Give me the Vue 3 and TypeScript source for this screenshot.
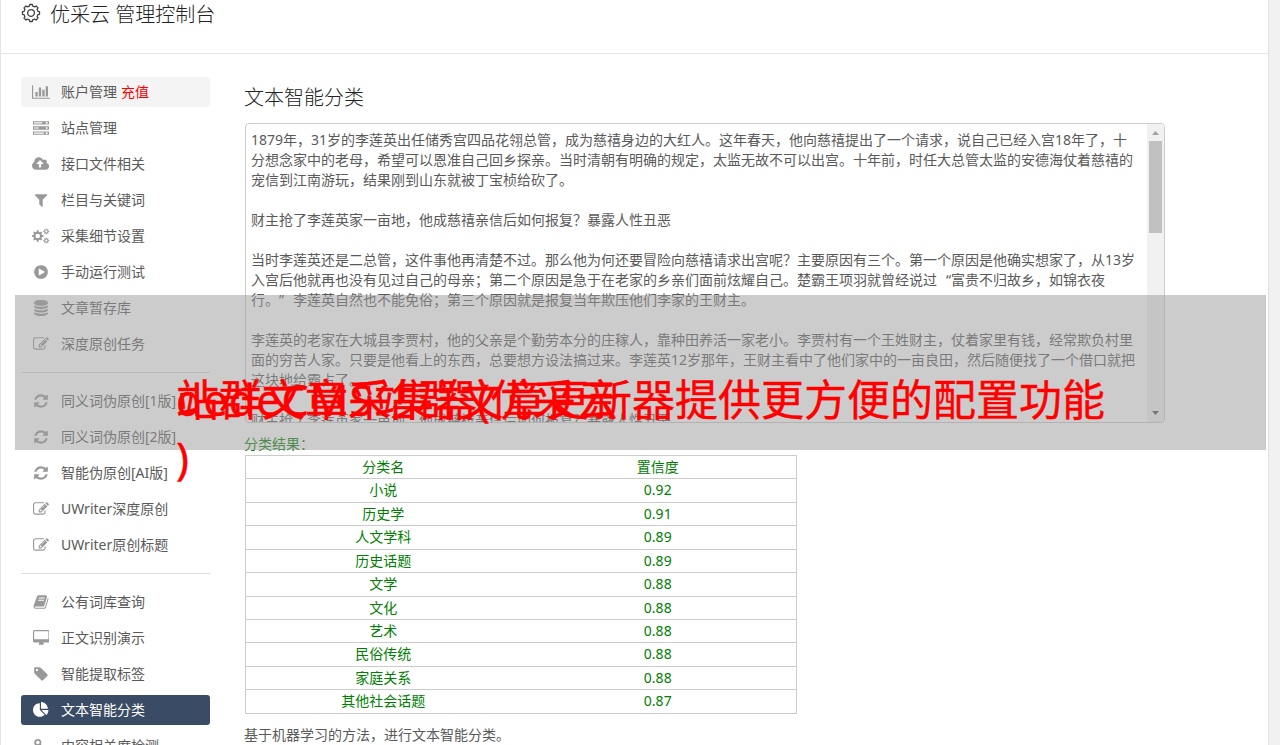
<script setup lang="ts">
interface MenuItem {
  label: string
  icon: string
  extra?: string
  active?: boolean
  hover?: boolean
}

function gear(cx: number, cy: number, outer: number, inner: number, hole: number, teeth: number): string {
  const step = (Math.PI * 2) / teeth
  const pt = (r: number, a: number) => `${(cx + r * Math.cos(a)).toFixed(1)} ${(cy + r * Math.sin(a)).toFixed(1)}`
  const pts: string[] = []
  for (let i = 0; i < teeth; i++) {
    const a = i * step - Math.PI / 2
    pts.push(pt(inner, a - step * 0.3), pt(outer, a - step * 0.2), pt(outer, a + step * 0.2), pt(inner, a + step * 0.3))
  }
  const ring = `M${cx - hole} ${cy}a${hole} ${hole} 0 1 0 ${hole * 2} 0a${hole} ${hole} 0 1 0 ${-hole * 2} 0z`
  return `M${pts.join('L')}z${ring}`
}

const icons: Record<string, { w: number; d: string }> = {
  chart: { w: 2048, d: 'M640 896v512h-256v-512h256zm384-512v1024h-256v-1024h256zm1024 1152v128h-2048v-1536h128v1408h1920zm-640-896v768h-256v-768h256zm384-384v1152h-256v-1152h256z' },
  server: { w: 1792, d: 'M0 128h1792v384h-1792zM128 256v128h896v-128zM1440 224v192h192v-192zM0 704h1792v384h-1792zM128 832v128h512v-128zM1440 800v192h192v-192zM0 1280h1792v384h-1792zM128 1408v128h1088v-128zM1440 1376v192h192v-192z' },
  cloud: { w: 1920, d: 'M1280 864q0-14-9-23l-352-352q-9-9-23-9t-23 9l-351 351q-10 12-10 24 0 14 9 23t23 9h224v352q0 13 9.5 22.5t22.5 9.5h192q13 0 22.5-9.5t9.5-22.5v-352h224q13 0 22.5-9.5t9.5-22.5zm640 288q0 159-112.5 271.5t-271.5 112.5h-1088q-185 0-316.5-131.5t-131.5-316.5q0-130 70-240t188-165q-2-30-2-43 0-212 150-362t362-150q156 0 285.5 87t188.5 231q71-62 166-62 106 0 181 75t75 181q0 76-41 138 130 31 213.5 135.5t83.5 238.5z' },
  filter: { w: 1792, d: 'M1595 295q17 41-14 70l-493 493v742q0 42-39 59-13 5-25 5-27 0-45-19l-256-256q-19-19-19-45v-486l-493-493q-31-29-14-70 17-39 59-39h1280q42 0 59 39z' },
  cogs: { w: 1920, d: gear(640, 896, 640, 480, 256, 8) + gear(1600, 384, 330, 235, 125, 8) + gear(1600, 1408, 330, 235, 125, 8) },
  play: { w: 1792, d: 'M896 128q209 0 385.5 103t279.5 279.5 103 385.5-103 385.5-279.5 279.5-385.5 103-385.5-103-279.5-279.5-103-385.5 103-385.5 279.5-279.5 385.5-103zm384 823q32-18 32-55t-32-55l-544-320q-31-19-64-1-32 19-32 56v640q0 37 32 56 16 8 32 8 17 0 32-9z' },
  database: { w: 1792, d: 'M896 768q237 0 443-43t325-127v170q0 69-103 128t-280 93.5-385 34.5-385-34.5-280-93.5-103-128v-170q119 84 325 127t443 43zm0 768q237 0 443-43t325-127v170q0 69-103 128t-280 93.5-385 34.5-385-34.5-280-93.5-103-128v-170q119 84 325 127t443 43zm0-384q237 0 443-43t325-127v170q0 69-103 128t-280 93.5-385 34.5-385-34.5-280-93.5-103-128v-170q119 84 325 127t443 43zm0-1152q208 0 385 34.5t280 93.5 103 128v128q0 69-103 128t-280 93.5-385 34.5-385-34.5-280-93.5-103-128v-128q0-69 103-128t280-93.5 385-34.5z' },
  edit: { w: 1792, d: 'M888 1184l116-116-152-152-116 116v56h96v96h56zm440-720q-16-16-33 1l-350 350q-17 17-1 33t33-1l350-350q17-17 1-33zm80 594v190q0 119-84.5 203.5t-203.5 84.5h-832q-119 0-203.5-84.5t-84.5-203.5v-832q0-119 84.5-203.5t203.5-84.5h832q63 0 117 25 15 7 18 23 3 17-9 29l-49 49q-14 14-32 8-23-6-45-6h-832q-66 0-113 47t-47 113v832q0 66 47 113t113 47h832q66 0 113-47t47-113v-126q0-13 9-22l64-64q15-15 35-7t20 29zm-96-738l288 288-672 672h-288v-288zm444 132l-92 92-288-288 92-92q28-28 68-28t68 28l152 152q28 28 28 68t-28 68z' },
  refresh: { w: 1792, d: 'M1639 1056q0 5-1 7-64 268-268 434.5t-478 166.5q-146 0-282.5-55t-243.5-157l-129 129q-19 19-45 19t-45-19-19-45v-448q0-26 19-45t45-19h448q26 0 45 19t19 45-19 45l-137 137q71 66 161 102t187 36q134 0 250-65t186-179q11-17 53-117 8-23 30-23h192q13 0 22.5 9.5t9.5 22.5zm25-800v448q0 26-19 45t-45 19h-448q-26 0-45-19t-19-45 19-45l138-138q-148-137-349-137-134 0-250 65t-186 179q-11 17-53 117-8 23-30 23h-199q-13 0-22.5-9.5t-9.5-22.5v-7q65-268 270-434.5t480-166.5q146 0 284 55.5t245 156.5l130-129q19-19 45-19t45 19 19 45z' },
  book: { w: 1792, d: 'M1703 478q40 57 18 129l-275 906q-19 64-76.5 107.5t-122.5 43.5h-923q-77 0-148.5-53.5t-99.5-131.5q-24-67-2-127 0-4 3-27t4-37q1-8-3-21.5t-3-19.5q2-11 8-21t16.5-23.5 16.5-23.5q23-38 45-91.5t30-91.5q3-10 .5-30t-.5-28q3-11 17-28t17-23q21-36 42-92t25-90q1-9-2.5-32t.5-28q4-13 22-30.5t22-22.5q19-26 42.5-84.5t27.5-96.5q1-8-3-25.5t-2-26.5q2-8 9-18t18-23 17-21q8-12 16.5-30.5t15-35 16-36 19.5-32 26.5-23.5 36-11.5 47.5 5.500l-1 3q38-9 51-9h761q74 0 114 56t18 130l-274 906q-36 119-71.5 153.5t-128.5 34.5h-869q-27 0-38 15-11 16-1 43 24 70 144 70h923q29 0 56-15.5t35-41.5l300-987q7-22 5-57 38 15 59 43zm-1064 2q-4 13 2 22.5t20 9.5h608q13 0 25.5-9.5t16.5-22.5l21-64q4-13-2-22.5t-20-9.5h-608q-13 0-25.5 9.5t-16.5 22.5zm-83 256q-4 13 2 22.5t20 9.5h608q13 0 25.5-9.5t16.5-22.5l21-64q4-13-2-22.5t-20-9.5h-608q-13 0-25.5 9.5t-16.5 22.5z' },
  desktop: { w: 1856, d: 'M1728 992v-832q0-13-9.5-22.5t-22.5-9.5h-1536q-13 0-22.5 9.5t-9.5 22.5v832q0 13 9.5 22.5t22.5 9.5h1536q13 0 22.5-9.5t9.5-22.5zm128-832v1088q0 66-47 113t-113 47h-544q0 37 16 77.5t32 71 16 43.5q0 26-19 45t-45 19h-448q-26 0-45-19t-19-45q0-14 16-44t32-70 16-78h-544q-66 0-113-47t-47-113v-1088q0-66 47-113t113-47h1536q66 0 113 47t47 113z' },
  tag: { w: 1792, d: 'M576 448q0-53-37.5-90.5t-90.5-37.5-90.5 37.5-37.5 90.5 37.5 90.5 90.5 37.5 90.5-37.5 37.5-90.5zm1067 576q0 53-37 90l-491 492q-39 37-91 37-53 0-90-37l-715-716q-38-37-64.5-101t-26.5-117v-416q0-52 38-90t90-38h416q53 0 117 26.5t102 64.5l715 714q37 39 37 91z' },
  pie: { w: 1792, d: 'M768 890l546 546q-106 108-247.5 168t-298.5 60q-209 0-385.5-103t-279.5-279.5-103-385.5 103-385.5 279.5-279.5 385.5-103v762zm187 6h773q0 157-60 298.5t-168 247.5zm709-128h-768v-768q209 0 385.5 103t279.5 279.5 103 385.5z' },
  link: { w: 1792, d: 'M540 110a400 400 0 0 1 400 400q0 100-50 180l150 150q80-50 180-50a400 400 0 1 1-400 400q0-100 50-180l-150-150q-80 50-180 50a400 400 0 1 1 0-800zm0 200a200 200 0 1 0 0 400 200 200 0 1 0 0-400z' },
}

const groups: MenuItem[][] = [
  [
    { label: '账户管理', extra: '充值', icon: 'chart', hover: true },
    { label: '站点管理', icon: 'server' },
    { label: '接口文件相关', icon: 'cloud' },
    { label: '栏目与关键词', icon: 'filter' },
    { label: '采集细节设置', icon: 'cogs' },
    { label: '手动运行测试', icon: 'play' },
    { label: '文章暂存库', icon: 'database' },
    { label: '深度原创任务', icon: 'edit' },
  ],
  [
    { label: '同义词伪原创[1版]', icon: 'refresh' },
    { label: '同义词伪原创[2版]', icon: 'refresh' },
    { label: '智能伪原创[AI版]', icon: 'refresh' },
    { label: 'UWriter深度原创', icon: 'edit' },
    { label: 'UWriter原创标题', icon: 'edit' },
  ],
  [
    { label: '公有词库查询', icon: 'book' },
    { label: '正文识别演示', icon: 'desktop' },
    { label: '智能提取标签', icon: 'tag' },
    { label: '文本智能分类', icon: 'pie', active: true },
    { label: '内容相关度检测', icon: 'link' },
  ],
]

const article: string[] = [
  '1879年，31岁的李莲英出任储秀宫四品花翎总管，成为慈禧身边的大红人。这年春天，他向慈禧提出了一个请求，说自己已经入宫18年了，十',
  '分想念家中的老母，希望可以恩准自己回乡探亲。当时清朝有明确的规定，太监无故不可以出宫。十年前，时任大总管太监的安德海仗着慈禧的',
  '宠信到江南游玩，结果刚到山东就被丁宝桢给砍了。',
  '',
  '财主抢了李莲英家一亩地，他成慈禧亲信后如何报复？暴露人性丑恶',
  '',
  '当时李莲英还是二总管，这件事他再清楚不过。那么他为何还要冒险向慈禧请求出宫呢？主要原因有三个。第一个原因是他确实想家了，从13岁',
  '入宫后他就再也没有见过自己的母亲；第二个原因是急于在老家的乡亲们面前炫耀自己。楚霸王项羽就曾经说过“富贵不归故乡，如锦衣夜',
  '行。”李莲英自然也不能免俗；第三个原因就是报复当年欺压他们李家的王财主。',
  '',
  '李莲英的老家在大城县李贾村，他的父亲是个勤劳本分的庄稼人，靠种田养活一家老小。李贾村有一个王姓财主，仗着家里有钱，经常欺负村里',
  '面的穷苦人家。只要是他看上的东西，总要想方设法搞过来。李莲英12岁那年，王财主看中了他们家中的一亩良田，然后随便找了一个借口就把',
  '这块地给霸占了。',
  '',
  '财主抢了李莲英家一亩地，他成慈禧亲信后如何报复？暴露人性丑恶',
]

// Curly quotes are split out so they can be set full-width.
const articleParts = article.map((line) => line.split(/([“”])/).filter((part) => part !== ''))

const rows: [string, string][] = [
  ['分类名', '置信度'],
  ['小说', '0.92'],
  ['历史学', '0.91'],
  ['人文学科', '0.89'],
  ['历史话题', '0.89'],
  ['文学', '0.88'],
  ['文化', '0.88'],
  ['艺术', '0.88'],
  ['民俗传统', '0.88'],
  ['家庭关系', '0.88'],
  ['其他社会话题', '0.87'],
]

const headerGear = gear(10, 10, 8.6, 7.1, 3.4, 8)
</script>

<template>
  <div class="page">
    <div class="panel">
      <header class="top">
        <svg class="top-icon" viewBox="0 0 20 20"><path :d="headerGear" /></svg>
        <span>优采云 管理控制台</span>
      </header>
      <div class="body">
        <nav class="side">
          <ul v-for="(group, gi) in groups" :key="gi" class="group">
            <li v-for="item in group" :key="item.label" class="item" :class="{ active: item.active, hover: item.hover }">
              <span class="icon">
                <svg :viewBox="`0 0 ${icons[item.icon].w} 1792`" :width="(icons[item.icon].w / 1792) * 16" height="16">
                  <path :d="icons[item.icon].d" fill-rule="evenodd" />
                </svg>
              </span>
              <span>{{ item.label }}<em v-if="item.extra">{{ item.extra }}</em></span>
            </li>
          </ul>
        </nav>
        <main class="main">
          <h1>文本智能分类</h1>
          <div class="editor">
            <div class="text">
              <p v-for="(parts, i) in articleParts" :key="i"><span v-for="(part, k) in parts" :key="k" :class="{ open: part === '“', close: part === '”' }">{{ part }}</span></p>
            </div>
            <div class="bar">
              <svg class="arrow" viewBox="0 0 17 17"><path d="M5 11h7l-3.500-4z" fill="#a3a3a3" /></svg>
              <div class="thumb"></div>
              <svg class="arrow" viewBox="0 0 17 17"><path d="M5 6h7l-3.500 4z" fill="#505050" /></svg>
            </div>
          </div>
          <div class="result-title">分类结果：</div>
          <div class="table">
            <div v-for="row in rows" :key="row[0]" class="row">
              <span>{{ row[0] }}</span><span>{{ row[1] }}</span>
            </div>
          </div>
          <p class="note">基于机器学习的方法，进行文本智能分类。</p>
        </main>
      </div>
    </div>
    <div class="banner">
      <div class="caption"><span class="latin">dedeCMS</span>站群文章更新器提供更方便的配置功能</div>
      <div class="caption">站群文章采集器<span class="paren">(</span>优采云<br />)</div>
    </div>
  </div>
</template>

<style>
body {
  overflow: hidden;
}
</style>

<style scoped>
.page {
  position: relative;
  width: 1280px;
  height: 745px;
  overflow: hidden;
  background: #f1f1f1;
  font-family: "Noto Sans", "Noto Sans CJK SC", sans-serif;
  font-size: 14px;
  color: #5a5a5a;
}
.panel {
  box-sizing: border-box;
  width: 1269px;
  height: 745px;
  overflow: hidden;
  background: #fff;
  border-left: 1px solid #e5e5e5;
  border-right: 1px solid #e0e0e0;
}
.top {
  box-sizing: border-box;
  display: flex;
  height: 54px;
  padding-left: 20px;
  border-bottom: 1px solid #e5e5e5;
  font-size: 20px;
  line-height: 30px;
  font-weight: 300;
  color: #222;
}
.top-icon {
  width: 20px;
  height: 20px;
  margin: 3px 9px 0 0;
  fill: none;
  stroke: #444;
  stroke-width: 1.3;
  stroke-linejoin: round;
}
.body {
  display: flex;
  padding: 23px 0 0 20px;
}
.side {
  width: 189px;
  flex: none;
}
.group {
  display: flex;
  flex-direction: column;
  list-style: none;
  margin: 0;
  padding: 0;
}
.group + .group {
  margin-top: 7px;
  padding-top: 13px;
  border-top: 1px solid #ddd;
}
.item {
  display: flex;
  align-items: center;
  height: 30px;
  margin-bottom: 6px;
  border-radius: 3px;
  line-height: 30px;
  white-space: nowrap;
}
.icon {
  display: flex;
  justify-content: center;
  width: 40px;
  fill: #999;
}
.item em {
  margin-left: 4px;
  font-style: normal;
  color: #f00;
}
.item.hover {
  background: #f4f4f4;
}
.item.active {
  background: #3a4b66;
  color: #fff;
}
.item.active .icon {
  fill: #fff;
}
.main {
  width: 920px;
  margin-left: 35px;
}
h1 {
  margin: 7px 0 11px -1px;
  font-size: 20px;
  line-height: 28px;
  font-weight: 300;
  color: #222;
}
.editor {
  box-sizing: border-box;
  display: flex;
  height: 300px;
  border: 1px solid #ccc;
  border-radius: 4px;
  overflow: hidden;
}
.text {
  flex: 1;
  padding: 6px 0 0 5px;
  overflow: hidden;
}
.text p {
  height: 20px;
  margin: 0;
  line-height: 20px;
  white-space: pre;
}
.open,
.close {
  display: inline-block;
  width: 14px;
}
.open {
  text-align: right;
}
.bar {
  display: flex;
  flex-direction: column;
  width: 17px;
  background: #f1f1f1;
}
.arrow {
  width: 17px;
  height: 17px;
}
.thumb {
  height: 92px;
  margin: 0 2px auto;
  background: #c1c1c1;
}
.result-title {
  height: 32px;
  margin-left: -1px;
  line-height: 42px;
  color: green;
}
.table {
  width: 552px;
  box-sizing: border-box;
  border: 1px solid #ccc;
  border-bottom: none;
  color: green;
}
.row {
  box-sizing: border-box;
  display: grid;
  grid-template-columns: 1fr 1fr;
  height: 23.43px;
  padding-right: 1px;
  border-bottom: 1px solid #ccc;
  line-height: 22.4px;
  text-align: center;
}
.note {
  margin: 11px 0 0 -1px;
  line-height: 20px;
}
.banner {
  position: absolute;
  left: 15px;
  top: 295px;
  width: 1251px;
  height: 155px;
  background: rgba(153, 153, 153, 0.5);
}
.caption {
  position: absolute;
  left: 161px;
  top: 76px;
  font-size: 43px;
  line-height: 58px;
  white-space: nowrap;
  color: #f00;
  -webkit-text-stroke: 0.4px #f00;
}
.latin {
  display: inline-block;
  width: 198px;
  letter-spacing: 1px;
}
.paren {
  display: inline-block;
  width: 13px;
}
</style>
